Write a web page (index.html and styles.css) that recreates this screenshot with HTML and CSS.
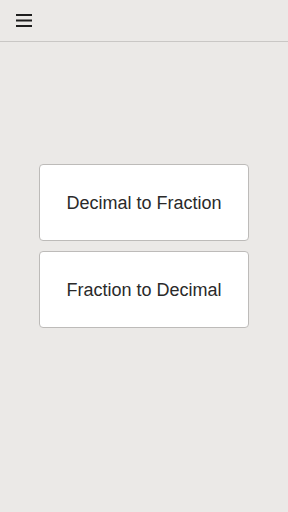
FILE: index.html
```html
<!DOCTYPE html>
<html lang="en">
<head>
  <meta charset="UTF-8" />
  <meta name="viewport" content="width=device-width, initial-scale=1.0" />
  <title>Fraction Converter</title>
  <link rel="stylesheet" href="styles.css">
</head>
<body>

  <div class="top-bar">
    <button class="menu-btn" aria-label="Menu">
      <svg width="16" height="13" viewBox="0 0 16 13">
        <rect x="0" y="0" width="16" height="2" fill="#1e1e1e" />
        <rect x="0" y="5.5" width="16" height="2" fill="#1e1e1e" />
        <rect x="0" y="11" width="16" height="2" fill="#1e1e1e" />
      </svg>
    </button>
  </div>

  <div class="choices">
    <button class="choice">Decimal to Fraction</button>
    <button class="choice">Fraction to Decimal</button>
  </div>

</body>
</html>
```

FILE: styles.css
```css
body {
  margin: 0;
  font-family: "Liberation Sans", Arial, sans-serif;
  background-color: #ebe9e7;
  height: 512px;
}
.top-bar {
  height: 42px;
  border-bottom: 1px solid #c9c7c5;
  display: flex;
  align-items: center;
  padding-left: 16px;
  box-sizing: border-box;
}
.menu-btn {
  background: transparent;
  border: none;
  padding: 0;
  display: flex;
  cursor: pointer;
}
.choices {
  display: flex;
  flex-direction: column;
  align-items: center;
  gap: 10px;
  padding-top: 122px;
}
.choice {
  width: 210px;
  height: 77px;
  padding-top: 2px;
  background-color: #fff;
  border: 1px solid #bdbbb9;
  border-radius: 4px;
  font-family: "Liberation Sans", Arial, sans-serif;
  font-size: 18px;
  color: #2a2a2a;
  cursor: pointer;
}
```
